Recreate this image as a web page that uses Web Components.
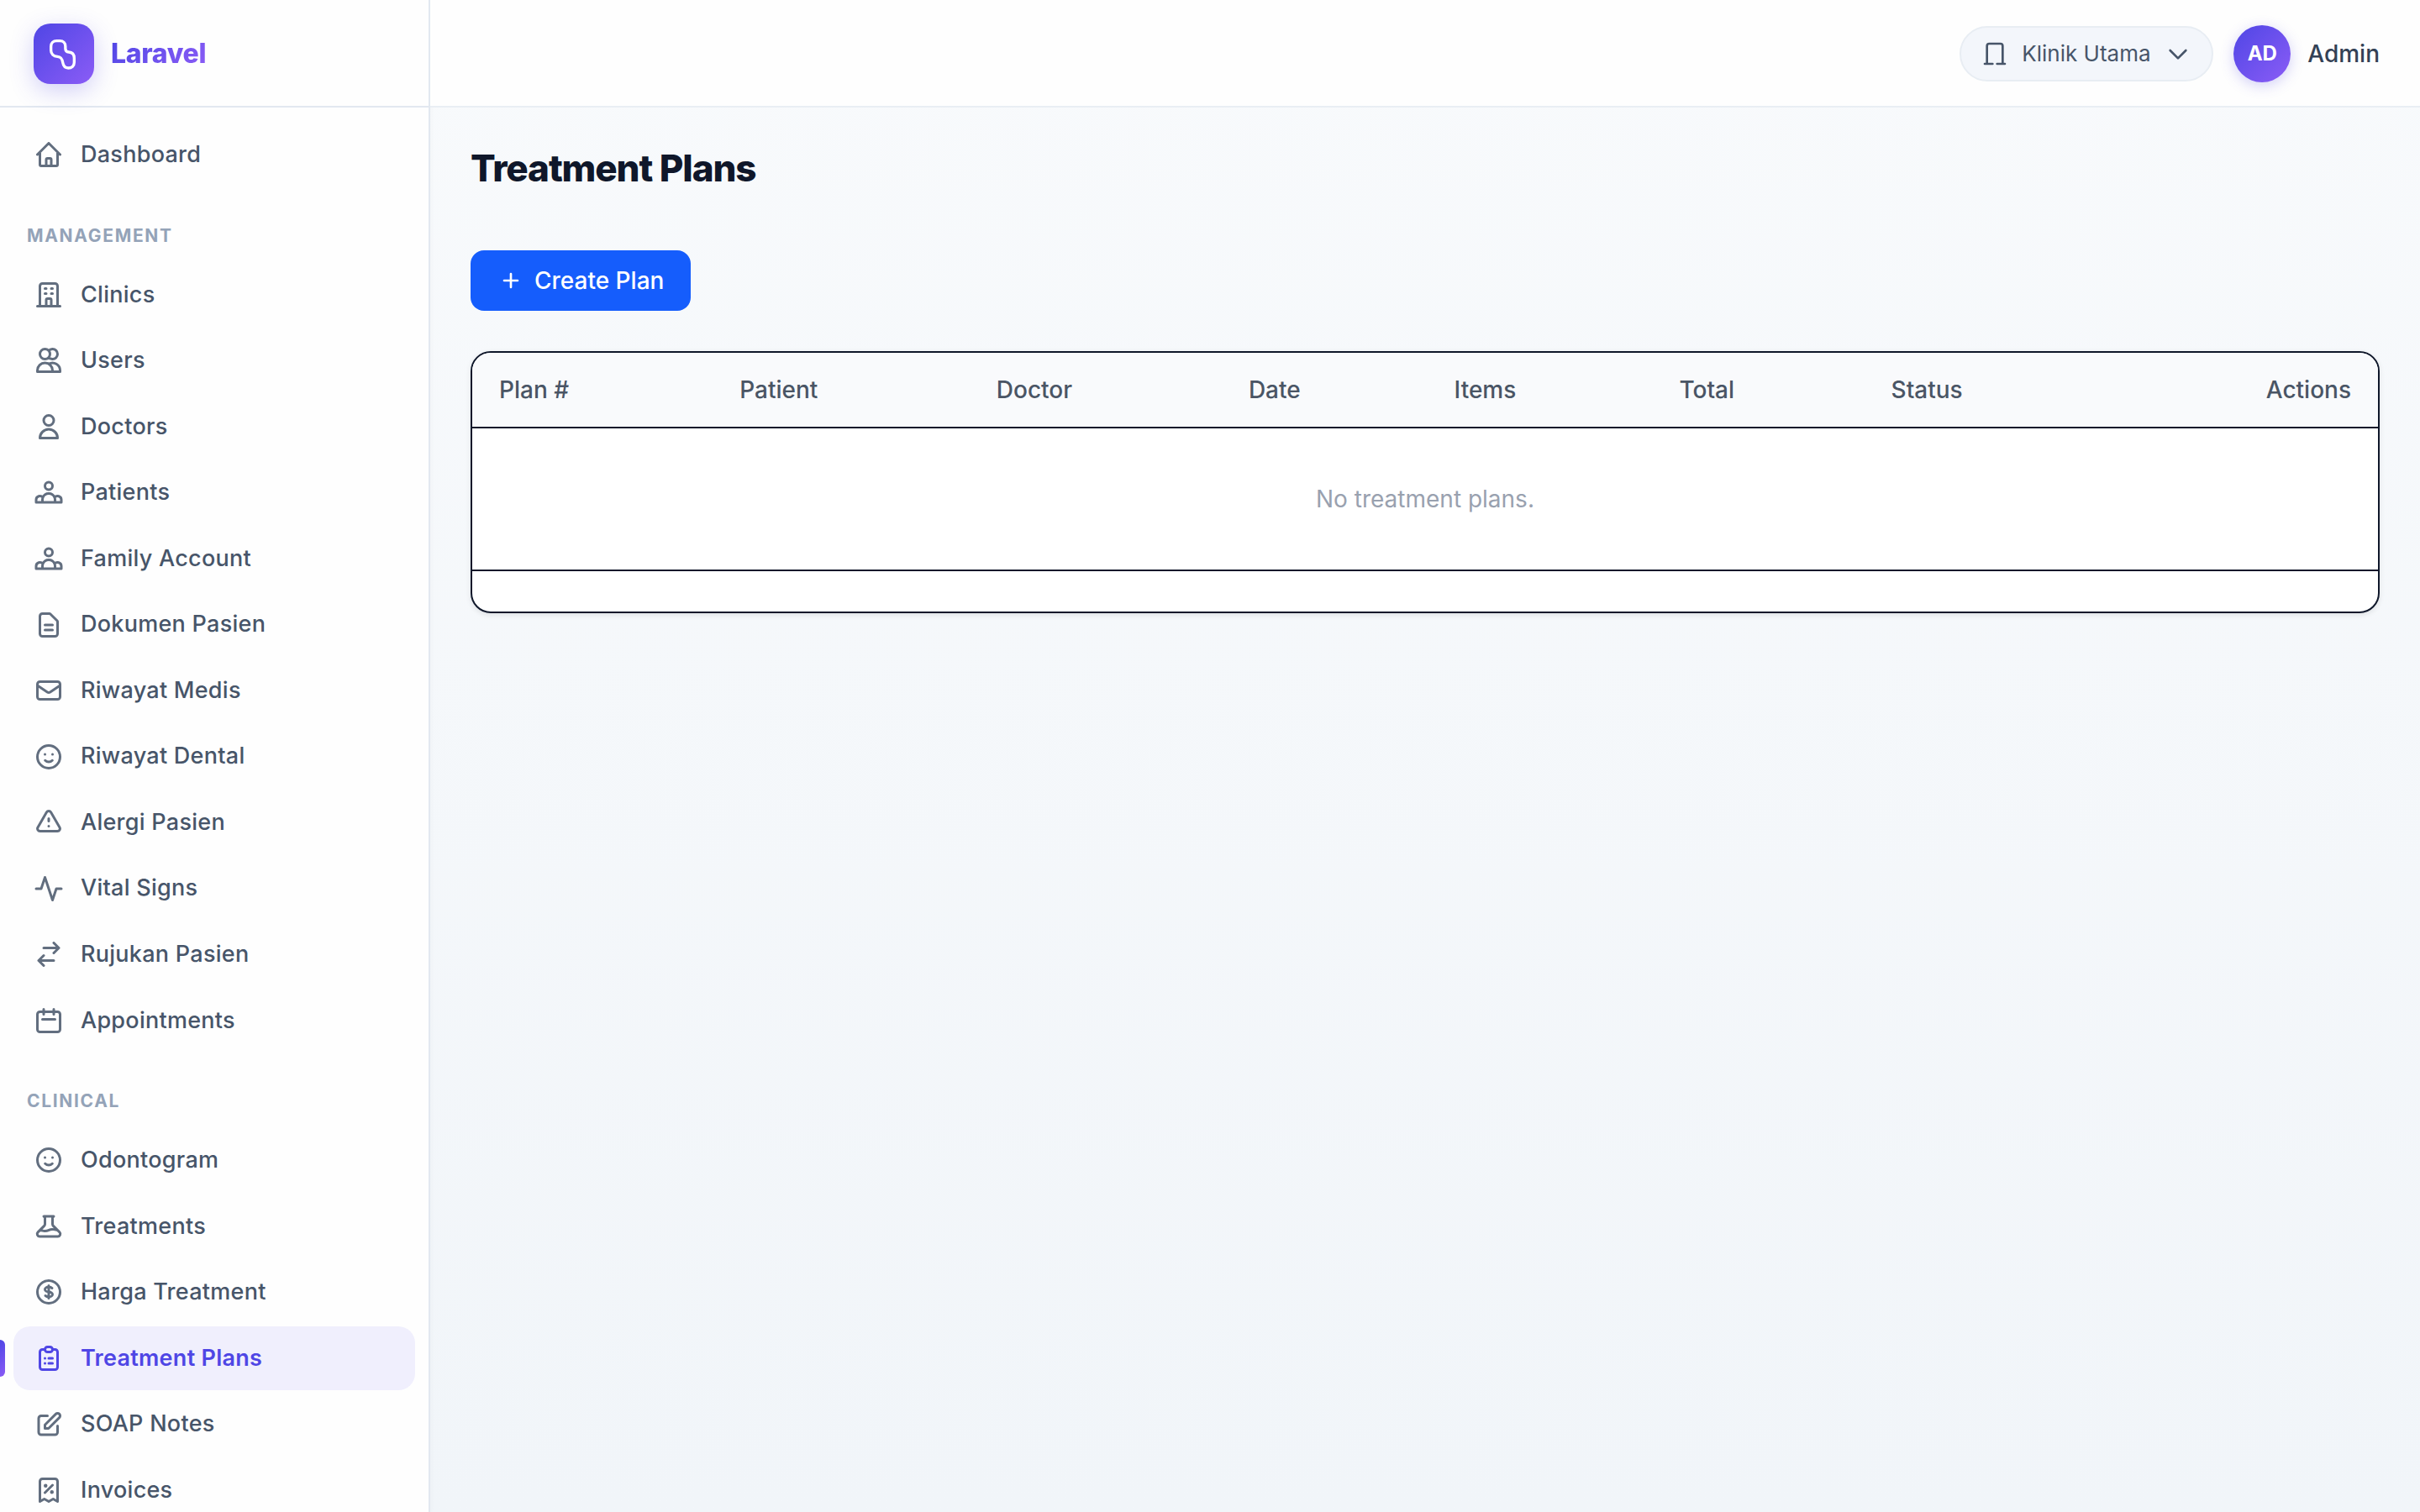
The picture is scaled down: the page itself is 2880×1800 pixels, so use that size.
<!DOCTYPE html>
<html lang="id">
<head>
<meta charset="UTF-8">
<meta name="viewport" content="width=device-width, initial-scale=1.0">
<title>Treatment Plans</title>
<style>
    html, body {
        margin: 0;
        height: 100%;
    }

    body {
        font-family: Inter, "Liberation Sans", sans-serif;
        font-size: 28px;
        line-height: 40px;
        color: #0f172a;
        overflow: hidden;
        --brand-gradient: linear-gradient(135deg, #4f46e5, #8b5cf6);
    }
</style>
</head>
<body>

<app-shell>
    <side-bar slot="sidebar" brand="Laravel">
        <nav-item icon="home">Dashboard</nav-item>
        <nav-section heading="Management">
            <nav-item icon="building">Clinics</nav-item>
            <nav-item icon="users">Users</nav-item>
            <nav-item icon="user">Doctors</nav-item>
            <nav-item icon="group">Patients</nav-item>
            <nav-item icon="group">Family Account</nav-item>
            <nav-item icon="document">Dokumen Pasien</nav-item>
            <nav-item icon="mail">Riwayat Medis</nav-item>
            <nav-item icon="smile">Riwayat Dental</nav-item>
            <nav-item icon="alert">Alergi Pasien</nav-item>
            <nav-item icon="activity">Vital Signs</nav-item>
            <nav-item icon="switch">Rujukan Pasien</nav-item>
            <nav-item icon="calendar">Appointments</nav-item>
        </nav-section>
        <nav-section heading="Clinical">
            <nav-item icon="smile">Odontogram</nav-item>
            <nav-item icon="beaker">Treatments</nav-item>
            <nav-item icon="dollar">Harga Treatment</nav-item>
            <nav-item icon="clipboard" active>Treatment Plans</nav-item>
            <nav-item icon="pencil">SOAP Notes</nav-item>
            <nav-item icon="receipt">Invoices</nav-item>
        </nav-section>
    </side-bar>

    <top-bar slot="topbar">
        <clinic-select clinics="Klinik Utama"></clinic-select>
        <user-menu initials="AD">Admin</user-menu>
    </top-bar>

    <page-title>Treatment Plans</page-title>
    <action-button icon="plus">Create Plan</action-button>
    <plan-table columns="Plan #,Patient,Doctor,Date,Items,Total,Status,Actions">No treatment plans.</plan-table>
</app-shell>

<script>
const ICONS = {
    logo: "M6.8 2.8h2.4c2.4 0 3.9 1.5 3.9 3.9v1.5c0 1.6.8 2.5 2.4 2.6 2.5.2 3.9 1.9 3.9 4.4v3c0 2.4-1.8 4-4.2 4s-3.6-1.5-4-4c-.4-2.4-1-4-3.8-4.2-2.9-.2-4.6-2-4.6-4.4V6.7c0-2.4 1.6-3.9 4-3.9z",
    home: "M3 12l2-2m0 0l7-7 7 7M5 10v10a1 1 0 001 1h3m10-11l2 2m-2-2v10a1 1 0 01-1 1h-3m-6 0a1 1 0 001-1v-4a1 1 0 011-1h2a1 1 0 011 1v4a1 1 0 001 1m-6 0h6",
    building: "M19 21V5a2 2 0 00-2-2H7a2 2 0 00-2 2v16m14 0h2m-2 0h-5m-9 0H3m2 0h5M9 7h1m-1 4h1m4-4h1m-1 4h1m-5 10v-5a1 1 0 011-1h2a1 1 0 011 1v5m-4 0h4",
    clinic: "M19 21V5a2 2 0 00-2-2H7a2 2 0 00-2 2v16m14 0h2m-2 0h-5m-9 0H3m2 0h5",
    users: "M12 4.354a4 4 0 110 5.292M15 21H3v-1a6 6 0 0112 0v1zm0 0h6v-1a6 6 0 00-9-5.197M13 7a4 4 0 11-8 0 4 4 0 018 0z",
    user: "M16 7a4 4 0 11-8 0 4 4 0 018 0zM12 14a7 7 0 00-7 7h14a7 7 0 00-7-7z",
    group: "M17 20h5v-2a3 3 0 00-5.356-1.857M17 20H7m10 0v-2c0-.656-.126-1.283-.356-1.857M7 20H2v-2a3 3 0 015.356-1.857M7 20v-2c0-.656.126-1.283.356-1.857m0 0a5.002 5.002 0 019.288 0M15 7a3 3 0 11-6 0 3 3 0 016 0z",
    document: "M9 12h6m-6 4h6m2 5H7a2 2 0 01-2-2V5a2 2 0 012-2h5.586a1 1 0 01.707.293l5.414 5.414a1 1 0 01.293.707V19a2 2 0 01-2 2z",
    mail: "M3 8l7.89 5.26a2 2 0 002.22 0L21 8M5 19h14a2 2 0 002-2V7a2 2 0 00-2-2H5a2 2 0 00-2 2v10a2 2 0 002 2z",
    smile: "M14.828 14.828a4 4 0 01-5.656 0M9 10h.01M15 10h.01M21 12a9 9 0 11-18 0 9 9 0 0118 0z",
    alert: "M12 9v2m0 4h.01m-6.938 4h13.856c1.54 0 2.502-1.667 1.732-3L13.732 4c-.77-1.333-2.694-1.333-3.464 0L3.34 16c-.77 1.333.192 3 1.732 3z",
    activity: "M22 12h-4l-3 9L9 3l-3 9H2",
    switch: "M8 7h12m0 0l-4-4m4 4l-4 4m0 6H4m0 0l4 4m-4-4l4-4",
    calendar: "M8 7V3m8 4V3m-9 8h10M5 21h14a2 2 0 002-2V7a2 2 0 00-2-2H5a2 2 0 00-2 2v12a2 2 0 002 2z",
    beaker: "M19.428 15.428a2 2 0 00-1.022-.547l-2.387-.477a6 6 0 00-3.86.517l-.318.158a6 6 0 01-3.86.517L6.05 15.21a2 2 0 00-1.806.547M8 4h8l-1 1v5.172a2 2 0 00.586 1.414l5 5c1.26 1.26.367 3.414-1.415 3.414H4.828c-1.782 0-2.674-2.154-1.414-3.414l5-5A2 2 0 009 10.172V5L8 4z",
    dollar: "M12 8c-1.657 0-3 .895-3 2s1.343 2 3 2 3 .895 3 2-1.343 2-3 2m0-8c1.11 0 2.08.402 2.599 1M12 8V7m0 1v8m0 0v1m0-1c-1.11 0-2.08-.402-2.599-1M21 12a9 9 0 11-18 0 9 9 0 0118 0z",
    clipboard: "M9 5H7a2 2 0 00-2 2v12a2 2 0 002 2h10a2 2 0 002-2V7a2 2 0 00-2-2h-2M9 5a2 2 0 002 2h2a2 2 0 002-2M9 5a2 2 0 012-2h2a2 2 0 012 2m-3 7h3m-3 4h3m-6-4h.01M9 16h.01",
    pencil: "M11 5H6a2 2 0 00-2 2v11a2 2 0 002 2h11a2 2 0 002-2v-5m-1.414-9.414a2 2 0 112.828 2.828L11.828 15H9v-2.828l8.586-8.586z",
    receipt: "M9 14l6-6m-5.5.5h.01m4.99 5h.01M19 21V5a2 2 0 00-2-2H7a2 2 0 00-2 2v16l3.5-2 3.5 2 3.5-2 3.5 2zM10 8.5a.5.5 0 11-1 0 .5.5 0 011 0zm5 5a.5.5 0 11-1 0 .5.5 0 011 0z",
    chevron: "M19 9l-7 7-7-7",
    plus: "M12 6v12M6 12h12"
}

const icon = (name, size, stroke = 2) => /*html*/`
    <svg width="${size}" height="${size}" viewBox="0 0 24 24" fill="none" stroke="currentColor" stroke-width="${stroke}"
        stroke-linecap="round" stroke-linejoin="round" aria-hidden="true"><path d="${ICONS[name]}"/></svg>`

class AppShell extends HTMLElement {
    constructor() {
        super();
        this.attachShadow({ mode: "open" }).innerHTML = /*html*/`
<style>
    :host {
        display: grid;
        grid-template-columns: 512px minmax(0, 1fr);
        height: 100vh;
        background: linear-gradient(180deg, #f8fafc, #f1f5f9);
    }
    .content {
        display: flex;
        flex-direction: column;
        min-width: 0;
    }
    main {
        display: flex;
        flex-direction: column;
        align-items: flex-start;
        gap: 48px;
        padding: 48px;
    }
</style>
<slot name="sidebar"></slot>
<div class="content">
    <slot name="topbar"></slot>
    <main><slot></slot></main>
</div>`;
    }
}

class SideBar extends HTMLElement {
    connectedCallback() {
        this.attachShadow({ mode: "open" }).innerHTML = /*html*/`
<style>
    :host {
        display: flex;
        flex-direction: column;
        min-height: 0;
        border-right: 2px solid #e2e8f0;
        background: #fefefe;
        box-shadow: 2px 0 4px rgba(15, 23, 42, 0.02);
    }
    .brand {
        display: flex;
        align-items: center;
        gap: 20px;
        padding: 28px 40px 26px;
        border-bottom: 2px solid #e2e8f0;
        color: inherit;
        text-decoration: none;
    }
    .mark {
        display: grid;
        place-items: center;
        width: 72px;
        height: 72px;
        border-radius: 20px;
        background: var(--brand-gradient);
        box-shadow: 0 8px 28px rgba(79, 70, 229, 0.25);
        color: #fff;
    }
    .name {
        font-size: 32px;
        font-weight: 800;
        letter-spacing: -0.01em;
        background: var(--brand-gradient);
        background-clip: text;
        -webkit-background-clip: text;
        color: transparent;
    }
    nav {
        display: flex;
        flex-direction: column;
        flex: 1;
        min-height: 0;
        overflow: hidden;
        padding: 18px 16px;
    }
</style>
<a class="brand" href="#">
    <span class="mark">${icon("logo", 40)}</span>
    <span class="name">${this.getAttribute("brand")}</span>
</a>
<nav><slot></slot></nav>`;
    }
}

class NavSection extends HTMLElement {
    connectedCallback() {
        this.attachShadow({ mode: "open" }).innerHTML = /*html*/`
<style>
    :host { display: block; }
    h2 {
        margin: 0;
        padding: 38px 16px 14px;
        font-size: 21px;
        line-height: 36px;
        font-weight: 700;
        letter-spacing: 0.08em;
        text-transform: uppercase;
        color: #94a3b8;
    }
</style>
<h2>${this.getAttribute("heading")}</h2>
<slot></slot>`;
    }
}

class NavItem extends HTMLElement {
    connectedCallback() {
        const active = this.hasAttribute("active")
        this.attachShadow({ mode: "open" }).innerHTML = /*html*/`
<style>
    :host {
        display: block;
        margin-bottom: 2px;
    }
    a {
        position: relative;
        display: flex;
        align-items: center;
        gap: 20px;
        padding: 16px 24px;
        border-radius: 20px;
        font-size: 27px;
        line-height: 1.65;
        font-weight: 500;
        letter-spacing: 0.01em;
        color: #475569;
        text-decoration: none;
    }
    svg {
        flex: none;
        opacity: 0.85;
    }
    :host([active]) a {
        background: #f0effd;
        color: #4f46e5;
        font-weight: 600;
    }
    :host([active]) svg { opacity: 1; }
    :host([active]) a::before {
        content: "";
        position: absolute;
        left: -16px;
        top: 16px;
        bottom: 16px;
        width: 6px;
        border-radius: 0 6px 6px 0;
        background: var(--brand-gradient);
    }
</style>
<a href="#" ${active ? 'aria-current="page"' : ""}>${icon(this.getAttribute("icon"), 36)}<slot></slot></a>`;
    }
}

class TopBar extends HTMLElement {
    constructor() {
        super();
        this.attachShadow({ mode: "open" }).innerHTML = /*html*/`
<style>
    :host { display: block; }
    header {
        display: flex;
        align-items: center;
        justify-content: flex-end;
        gap: 24px;
        padding: 30px 48px 28px;
        border-bottom: 2px solid #e9eef4;
        background: #fefefe;
    }
</style>
<header><slot></slot></header>`;
    }
}

class ClinicSelect extends HTMLElement {
    connectedCallback() {
        const options = this.getAttribute("clinics").split(",").map((name) => `<option>${name}</option>`).join("")
        this.attachShadow({ mode: "open" }).innerHTML = /*html*/`
<style>
    :host { display: block; }
    label {
        display: flex;
        align-items: center;
        gap: 16px;
        padding: 12px 24px;
        border: 2px solid #e8edf3;
        border-radius: 34px;
        background: #f3f6fb;
        color: #475569;
    }
    select {
        appearance: none;
        margin: 0;
        padding: 0;
        border: 0;
        background: none;
        font: inherit;
        font-size: 26px;
        line-height: 38px;
        color: inherit;
    }
</style>
<label>
    ${icon("clinic", 32)}
    <select aria-label="Klinik">${options}</select>
    ${icon("chevron", 32)}
</label>`;
    }
}

class UserMenu extends HTMLElement {
    connectedCallback() {
        this.attachShadow({ mode: "open" }).innerHTML = /*html*/`
<style>
    :host { display: block; }
    button {
        display: flex;
        align-items: center;
        gap: 20px;
        margin: 0;
        padding: 0;
        border: 0;
        background: none;
        font: inherit;
        font-weight: 500;
        color: #334155;
    }
    .avatar {
        display: grid;
        place-items: center;
        width: 68px;
        height: 68px;
        border-radius: 50%;
        background: var(--brand-gradient);
        box-shadow: 0 4px 16px rgba(79, 70, 229, 0.25);
        font-size: 24px;
        font-weight: 700;
        color: #fff;
    }
</style>
<button type="button">
    <span class="avatar">${this.getAttribute("initials")}</span>
    <slot></slot>
</button>`;
    }
}

class PageTitle extends HTMLElement {
    constructor() {
        super();
        this.attachShadow({ mode: "open" }).innerHTML = /*html*/`
<style>
    :host { display: block; }
    h1 {
        margin: 0;
        padding-bottom: 26px;
        font-size: 44px;
        line-height: 48px;
        font-weight: 800;
        letter-spacing: -0.025em;
    }
</style>
<h1><slot></slot></h1>`;
    }
}

class ActionButton extends HTMLElement {
    connectedCallback() {
        this.attachShadow({ mode: "open" }).innerHTML = /*html*/`
<style>
    :host { display: block; }
    button {
        display: flex;
        align-items: center;
        gap: 12px;
        margin: 0;
        padding: 16px 32px;
        border: 0;
        border-radius: 16px;
        background: #155dfc;
        font: inherit;
        font-weight: 500;
        color: #fff;
    }
</style>
<button type="button">${icon(this.getAttribute("icon"), 32)}<slot></slot></button>`;
    }
}

class PlanTable extends HTMLElement {
    connectedCallback() {
        const columns = this.getAttribute("columns").split(",")
        this.attachShadow({ mode: "open" }).innerHTML = /*html*/`
<style>
    :host {
        display: block;
        box-sizing: border-box;
        width: 100%;
        overflow: hidden;
        border: 2px solid #0f172a;
        border-radius: 24px;
        background: #fff;
        box-shadow: 0 2px 6px rgba(0, 0, 0, 0.1);
    }
    table {
        width: 100%;
        border-collapse: collapse;
    }
    th {
        padding: 24px 32px;
        background: #f9fafc;
        font-weight: 500;
        text-align: left;
        color: #4a5565;
    }
    th:last-child { text-align: right; }
    td {
        padding: 64px 32px;
        border-top: 2px solid #0f172a;
        text-align: center;
        color: #99a1af;
    }
    footer {
        height: 48px;
        border-top: 2px solid #0f172a;
    }
</style>
<table>
    <thead><tr>${columns.map((name) => `<th scope="col">${name}</th>`).join("")}</tr></thead>
    <tbody><tr><td colspan="${columns.length}"><slot></slot></td></tr></tbody>
</table>
<footer></footer>`;
    }
}

customElements.define("app-shell", AppShell);
customElements.define("side-bar", SideBar);
customElements.define("nav-section", NavSection);
customElements.define("nav-item", NavItem);
customElements.define("top-bar", TopBar);
customElements.define("clinic-select", ClinicSelect);
customElements.define("user-menu", UserMenu);
customElements.define("page-title", PageTitle);
customElements.define("action-button", ActionButton);
customElements.define("plan-table", PlanTable);
</script>
</body>
</html>
